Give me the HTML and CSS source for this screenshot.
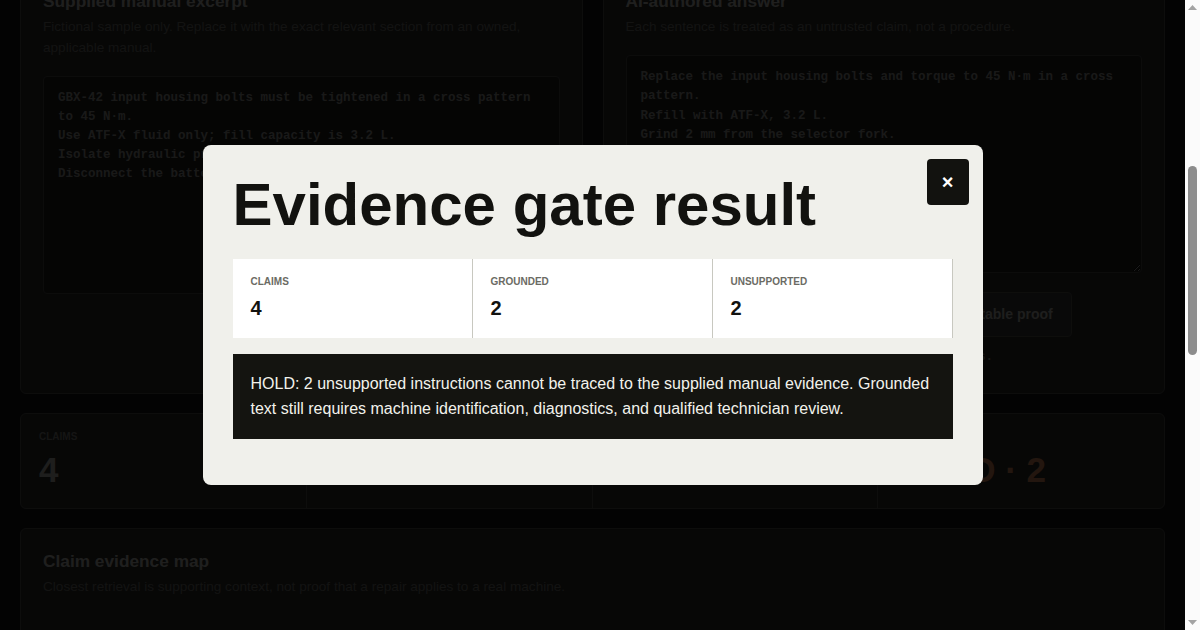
FILE: index.html
```html
<!DOCTYPE html>
<html lang="en">
<head>
<meta charset="utf-8">
<title>Manual evidence gate</title>
<link rel="stylesheet" href="styles.css">
</head>
<body>
<div class="scroller">
  <div class="overlay">
    <div class="modal" role="dialog" aria-modal="true" aria-labelledby="gate-title">
      <button class="close" type="button" aria-label="Close">×</button>
      <h2 id="gate-title">Evidence gate result</h2>
      <div class="gate-stats">
        <div class="gate-stat"><span class="gate-label">Claims</span><span class="gate-value">4</span></div>
        <div class="gate-stat"><span class="gate-label">Grounded</span><span class="gate-value">2</span></div>
        <div class="gate-stat"><span class="gate-label">Unsupported</span><span class="gate-value">2</span></div>
      </div>
      <p class="hold">HOLD: 2 unsupported instructions cannot be traced to the supplied manual evidence. Grounded text still requires machine identification, diagnostics, and qualified technician review.</p>
    </div>
  </div>

  <div class="page">
    <header class="masthead">
      <p class="eyebrow">Repair assistant · evidence gate</p>
      <h1>Check an AI repair answer against the manual you own</h1>
      <p class="lede">Paste the exact manual section for the machine in front of you and the answer an assistant produced. Every sentence becomes a claim, and only claims that trace back to the supplied text are marked grounded.</p>
      <ul class="pills">
        <li>Runs locally</li>
        <li>No retrieval from the web</li>
        <li>Sentence-level claims</li>
        <li>Exportable audit trail</li>
      </ul>
      <div class="steps">
        <div class="step"><span class="step-no">01</span><h3>Supply evidence</h3><p>Only the text you paste is treated as a source.</p></div>
        <div class="step"><span class="step-no">02</span><h3>Split the answer</h3><p>Each sentence is scored against every manual line.</p></div>
        <div class="step"><span class="step-no">03</span><h3>Gate the result</h3><p>Any unsupported instruction holds the whole answer.</p></div>
      </div>
      <p class="notice">This tool does not identify machines, diagnose faults or replace a qualified technician. A grounded claim only means similar wording exists in the text you supplied; it says nothing about whether that text is correct for your exact model, serial range or condition.</p>
    </header>

    <section class="sources">
      <article class="card">
        <h2>Supplied manual excerpt</h2>
        <p class="hint">Fictional sample only. Replace it with the exact relevant section from an owned, applicable manual.</p>
        <textarea class="code" spellcheck="false" aria-label="Manual excerpt">GBX-42 input housing bolts must be tightened in a cross pattern to 45 N·m.
Use ATF-X fluid only; fill capacity is 3.2 L.
Isolate hydraulic pressure before opening the housing.
Disconnect the battery before any electrical work.</textarea>
      </article>
      <article class="card">
        <h2>AI-authored answer</h2>
        <p class="hint">Each sentence is treated as an untrusted claim, not a procedure.</p>
        <textarea class="code" spellcheck="false" aria-label="AI answer">Replace the input housing bolts and torque to 45 N·m in a cross pattern.
Refill with ATF-X, 3.2 L.
Grind 2 mm from the selector fork.
Bypass the pressure interlock to test.</textarea>
        <div class="actions">
          <button class="btn btn-primary" type="button">Run evidence gate on answer</button>
          <button class="btn" type="button">Export auditable proof</button>
        </div>
        <p class="status">Export stays locked until each claim has sources.</p>
      </article>
    </section>

    <section class="summary">
      <div class="stat"><span class="stat-label">Claims</span><span class="stat-value">4</span></div>
      <div class="stat"><span class="stat-label">Grounded</span><span class="stat-value">2</span></div>
      <div class="stat"><span class="stat-label">Unsupported</span><span class="stat-value">2</span></div>
      <div class="stat"><span class="stat-label">Gate</span><span class="stat-value stat-hold">HOLD · 2</span></div>
    </section>

    <section class="card map">
      <h2>Claim evidence map</h2>
      <p class="hint">Closest retrieval is supporting context, not proof that a repair applies to a real machine.</p>
      <ol class="claims">
        <li class="claim">
          <div class="claim-head"><span class="claim-no">Claim 1</span><span class="badge">Grounded</span><span class="score">match 0.91</span></div>
          <p class="claim-text">Replace the input housing bolts and torque to 45 N·m in a cross pattern.</p>
          <p class="evidence-label">Closest manual line</p>
          <p class="evidence">GBX-42 input housing bolts must be tightened in a cross pattern to 45 N·m.</p>
          <p class="claim-note">Torque value and tightening pattern both appear in the excerpt.</p>
        </li>
        <li class="claim">
          <div class="claim-head"><span class="claim-no">Claim 2</span><span class="badge">Grounded</span><span class="score">match 0.88</span></div>
          <p class="claim-text">Refill with ATF-X, 3.2 L.</p>
          <p class="evidence-label">Closest manual line</p>
          <p class="evidence">Use ATF-X fluid only; fill capacity is 3.2 L.</p>
          <p class="claim-note">Fluid type and capacity match the supplied text.</p>
        </li>
        <li class="claim">
          <div class="claim-head"><span class="claim-no">Claim 3</span><span class="badge badge-hold">Unsupported</span><span class="score">match 0.12</span></div>
          <p class="claim-text">Grind 2 mm from the selector fork.</p>
          <p class="evidence-label">Closest manual line</p>
          <p class="evidence">Isolate hydraulic pressure before opening the housing.</p>
          <p class="claim-note">No line in the excerpt mentions machining the selector fork.</p>
        </li>
        <li class="claim">
          <div class="claim-head"><span class="claim-no">Claim 4</span><span class="badge badge-hold">Unsupported</span><span class="score">match 0.09</span></div>
          <p class="claim-text">Bypass the pressure interlock to test.</p>
          <p class="evidence-label">Closest manual line</p>
          <p class="evidence">Disconnect the battery before any electrical work.</p>
          <p class="claim-note">The excerpt never permits bypassing a safety interlock.</p>
        </li>
      </ol>
    </section>
  </div>
</div>

<div class="scrollbar" aria-hidden="true">
  <span class="sb-btn"><svg width="9" height="5" viewBox="0 0 9 5"><path d="M4.5 0L9 5H0Z" fill="#a3a3a3"/></svg></span>
  <div class="sb-track"><div class="sb-thumb"></div></div>
  <span class="sb-btn"><svg width="9" height="5" viewBox="0 0 9 5"><path d="M0 0H9L4.5 5Z" fill="#a3a3a3"/></svg></span>
</div>
<script src="script.js"></script>
</body>
</html>
```

FILE: styles.css
```css
* {
  box-sizing: border-box;
}

html,
body {
  height: 100%;
  margin: 0;
  overflow: hidden;
  background: #141414;
}

body {
  display: flex;
  color: #b8b8b4;
  font-family: "Liberation Sans", Arial, sans-serif;
}

.scroller {
  flex: 1 1 auto;
  min-width: 0;
  height: 100vh;
  overflow-y: auto;
  background: #141414;
}

/* classic light scrollbar beside the scroll viewport */
.scrollbar {
  flex: 0 0 15px;
  display: flex;
  flex-direction: column;
  height: 100vh;
  background: #fbfbfb;
}

.sb-btn {
  display: flex;
  align-items: center;
  justify-content: center;
  height: 15px;
  flex: 0 0 15px;
}

.sb-btn svg {
  display: block;
}

.sb-track {
  flex: 1 1 auto;
  padding: 0 3px;
}

.sb-thumb {
  height: 184px;
  background: #8c8c8c;
  border-radius: 5px;
}

.page {
  display: flex;
  flex-direction: column;
  gap: 19px;
  padding: 20px;
}

/* ---------- masthead ---------- */
.masthead {
  padding: 28px 22px;
  background: #2c2c2a;
  border: 1px solid #50504c;
  border-radius: 6px;
}

.eyebrow {
  margin: 0 0 10px;
  font-size: 12px;
  font-weight: 700;
  letter-spacing: 0.08em;
  text-transform: uppercase;
  color: #80807c;
}

.masthead h1 {
  margin: 0 0 13px;
  font-size: 34px;
  line-height: 40px;
  color: #c8c8c4;
}

.lede {
  margin: 0 0 18px;
  max-width: 860px;
  font-size: 16px;
  line-height: 25px;
  color: #8a8a86;
}

.pills {
  display: flex;
  flex-wrap: wrap;
  gap: 8px;
  margin: 0 0 16px;
  padding: 0;
  list-style: none;
}

.pills li {
  padding: 6px 12px;
  border: 1px solid #50504c;
  border-radius: 999px;
  font-size: 12px;
  color: #8a8a86;
}

.steps {
  display: grid;
  grid-template-columns: repeat(3, 1fr);
  gap: 14px;
  margin-bottom: 18px;
}

.step {
  padding: 20px;
  background: #20201e;
  border: 1px solid #4a4a46;
  border-radius: 4px;
}

.step-no {
  font-family: "Liberation Mono", monospace;
  font-size: 12px;
  font-weight: 700;
  color: #80807c;
}

.step h3 {
  margin: 6px 0 4px;
  font-size: 15px;
  color: #c0c0bc;
}

.step p {
  margin: 0;
  font-size: 13.6px;
  line-height: 20.4px;
  color: #74746f;
}

.notice {
  margin: 0;
  font-size: 13.6px;
  line-height: 20.4px;
  color: #74746f;
}

/* ---------- input cards ---------- */
.sources {
  display: grid;
  grid-template-columns: 1fr 1fr;
  gap: 20px;
}

.card {
  padding: 22px 22px 26px;
  background: #2c2c2a;
  border: 1px solid #50504c;
  border-radius: 6px;
}

.card h2 {
  margin: 0 0 5px;
  font-size: 17.3px;
  line-height: 21.6px;
  color: #c0c0bc;
}

.hint {
  margin: 0;
  font-size: 13.6px;
  line-height: 20.4px;
  color: #74746f;
}

.code {
  display: block;
  width: 100%;
  height: 218px;
  margin: 17.5px 0 0;
  padding: 12px 14px;
  background: #20201e;
  border: 1px solid #4a4a46;
  border-radius: 4px;
  color: #9c9c98;
  font-family: "Liberation Mono", "DejaVu Sans Mono", monospace;
  font-size: 12.5px;
  font-weight: 700;
  line-height: 19.2px;
  resize: vertical;
}

.actions {
  display: flex;
  gap: 16px;
  margin-top: 19px;
}

.btn {
  padding: 13px 18px;
  background: #3a3a37;
  border: 1px solid #56564f;
  border-radius: 4px;
  color: #b8b8b4;
  font-family: "Liberation Sans", Arial, sans-serif;
  font-size: 14px;
  font-weight: 700;
  line-height: 17px;
}

.btn-primary {
  padding: 13px 22px;
  background: #c8c8c4;
  border-color: #c8c8c4;
  color: #141414;
}

.status {
  margin: 10px 0 0;
  font-family: "Liberation Mono", monospace;
  font-size: 12.5px;
  font-weight: 700;
  line-height: 20px;
  color: #9a9a94;
}

/* ---------- summary ---------- */
.summary {
  display: grid;
  grid-template-columns: repeat(4, 1fr);
  background: #2c2c2a;
  border: 1px solid #50504c;
  border-radius: 6px;
}

.stat {
  padding: 17px 18px 18px;
  border-right: 1px solid #50504c;
}

.stat:last-child {
  border-right: 0;
}

.stat-label,
.gate-label {
  display: block;
  margin-bottom: 8px;
  font-size: 10px;
  font-weight: 700;
  line-height: 12px;
  text-transform: uppercase;
}

.stat-label {
  color: #80807c;
}

.stat-value {
  display: block;
  font-size: 35px;
  font-weight: 700;
  line-height: 38.5px;
  color: #b8b8b4;
}

.stat-hold {
  color: #d68c5e;
}

/* ---------- claim map ---------- */
.claims {
  display: flex;
  flex-direction: column;
  margin: 18px 0 0;
  padding: 0;
  list-style: none;
}

.claim {
  padding: 24px 0;
  border-top: 1px solid #4a4a46;
}

.claim:first-child {
  border-top: 0;
}

.claim-head {
  display: flex;
  align-items: center;
  gap: 10px;
  margin-bottom: 14px;
}

.claim-no {
  font-size: 11px;
  font-weight: 700;
  text-transform: uppercase;
  color: #80807c;
}

.badge {
  padding: 3px 8px;
  border-radius: 3px;
  background: #50504c;
  font-size: 11px;
  font-weight: 700;
  text-transform: uppercase;
  color: #c8c8c4;
}

.badge-hold {
  background: #6a3a22;
  color: #ffa870;
}

.score {
  margin-left: auto;
  font-family: "Liberation Mono", monospace;
  font-size: 12px;
  color: #80807c;
}

.claim-text,
.evidence {
  margin: 0 0 14px;
  font-family: "Liberation Mono", monospace;
  font-size: 12.5px;
  font-weight: 700;
  line-height: 19.2px;
  color: #a8a8a4;
}

.evidence-label {
  margin: 0 0 6px;
  font-size: 10px;
  font-weight: 700;
  text-transform: uppercase;
  color: #80807c;
}

.evidence {
  padding: 12px 14px;
  background: #20201e;
  border-left: 3px solid #50504c;
}

.claim-note {
  margin: 0;
  font-size: 13.6px;
  line-height: 20.4px;
  color: #74746f;
}

/* ---------- modal (sticks over the scroll viewport) ---------- */
.overlay {
  position: sticky;
  top: 0;
  z-index: 10;
  display: grid;
  place-items: center;
  height: 100vh;
  margin-bottom: -100vh;
  background: rgba(0, 0, 0, 0.84);
}

.modal {
  position: relative;
  width: 780px;
  padding: 30px 30px 46px;
  background: #f0f0eb;
  border-radius: 8px;
  color: #12120f;
}

.modal h2 {
  margin: 0 0 24px;
  font-size: 60px;
  font-weight: 700;
  line-height: 60px;
}

.close {
  position: absolute;
  top: 14px;
  right: 14px;
  width: 42px;
  height: 46px;
  padding: 0;
  background: #12120f;
  border: 0;
  border-radius: 4px;
  color: #ffffff;
  font-family: "Liberation Sans", Arial, sans-serif;
  font-size: 20px;
  font-weight: 700;
  line-height: 46px;
}

.gate-stats {
  display: grid;
  grid-template-columns: repeat(3, 1fr);
  background: #ffffff;
}

.gate-stat {
  padding: 17px 18px 18px;
  border-right: 1px solid #c8c8c0;
}

.gate-label {
  color: #6b6b64;
}

.gate-value {
  display: block;
  font-size: 20px;
  font-weight: 700;
  line-height: 24px;
}

.hold {
  margin: 16px 0 0;
  padding: 17px 18px 18px;
  background: #141410;
  color: #f2f2ec;
  font-size: 16px;
  line-height: 25px;
}
```

FILE: script.js
```js
function updateThumb() {
  var s = document.querySelector('.scroller');
  var track = document.querySelector('.sb-track');
  var thumb = document.querySelector('.sb-thumb');
  var trackH = track.clientHeight;
  var h = Math.max(24, trackH * s.clientHeight / s.scrollHeight);
  var range = s.scrollHeight - s.clientHeight;
  var top = range > 0 ? (trackH - h) * s.scrollTop / range : 0;
  thumb.style.height = h + 'px';
  thumb.style.marginTop = top + 'px';
}

function placeView() {
  var scroller = document.querySelector('.scroller');
  var anchor = document.querySelector('.sources');
  var offset = anchor.getBoundingClientRect().top - scroller.getBoundingClientRect().top;
  scroller.scrollTop = scroller.scrollTop + offset + 32;
  updateThumb();
}

placeView();
window.addEventListener('load', placeView);
document.querySelector('.scroller').addEventListener('scroll', updateThumb);
```
